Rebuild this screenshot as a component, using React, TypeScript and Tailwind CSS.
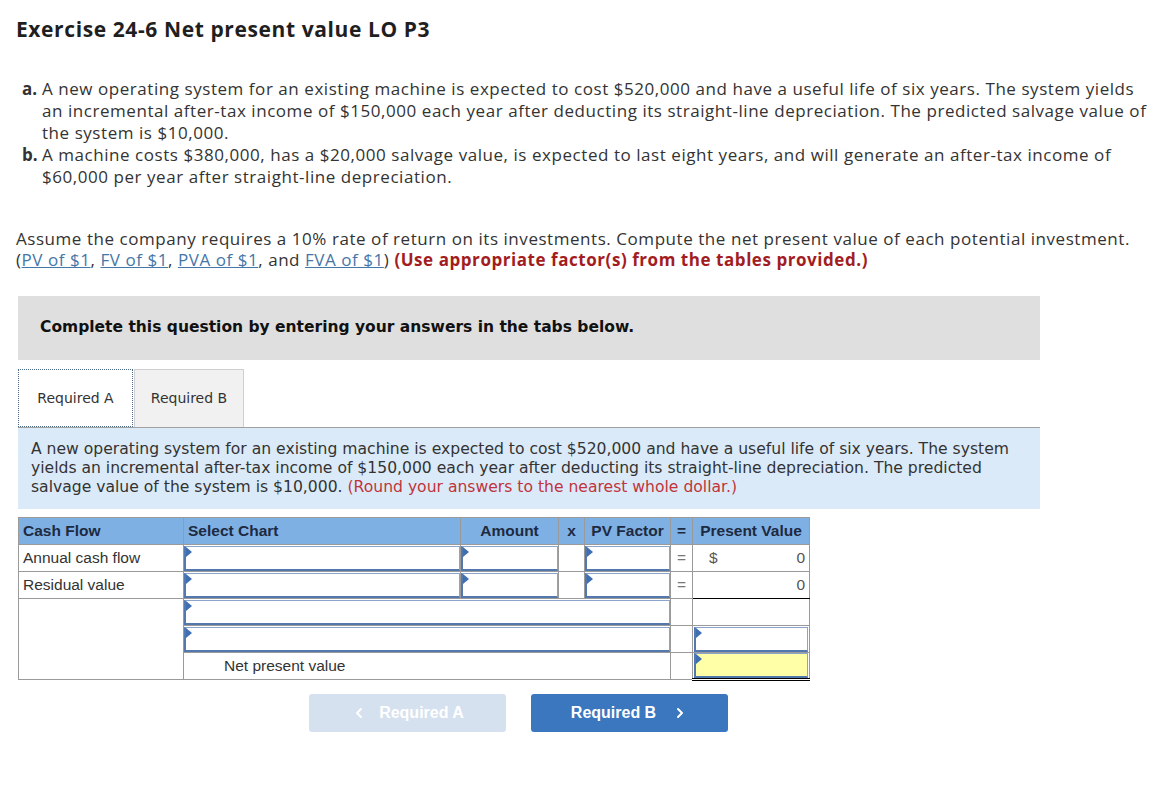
import { ChevronLeft, ChevronRight } from 'lucide-react';

function Marker() {
  return (
    <span className="absolute left-0 top-0 h-0 w-0 border-y-[5px] border-l-[6px] border-y-transparent border-l-[#3f6fb3]" />
  );
}

function InputBox({ yellow = false }: { yellow?: boolean }) {
  return (
    <div
      className={`relative h-[25px] w-full border border-[#8aa4cc] border-b-2 border-l-2 border-b-[#5378ad] border-l-[#5378ad] ${
        yellow ? 'bg-[#ffffa8]' : 'bg-white'
      }`}
    >
      <Marker />
    </div>
  );
}

const cell = 'border border-[#9a9a9a] p-0 align-middle';

function AnswerTable() {
  return (
    <table className="mt-2 ml-[2px] w-[791px] table-fixed border-collapse font-['Liberation_Sans',Arial,sans-serif] text-[15.5px] text-[#333]">
      <colgroup>
        <col className="w-[165px]" />
        <col className="w-[277px]" />
        <col className="w-[98px]" />
        <col className="w-[26px]" />
        <col className="w-[86px]" />
        <col className="w-[22px]" />
        <col className="w-[117px]" />
      </colgroup>
      <thead>
        <tr className="h-[27px] bg-[#7fb0e4] font-bold text-[#1d2a3f]">
          <th className={`${cell} pl-1 text-left`}>Cash Flow</th>
          <th className={`${cell} pl-1 text-left`}>Select Chart</th>
          <th className={`${cell} text-center`}>Amount</th>
          <th className={`${cell} text-center`}>x</th>
          <th className={`${cell} text-center`}>PV Factor</th>
          <th className={`${cell} text-center`}>=</th>
          <th className={`${cell} text-center`}>Present Value</th>
        </tr>
      </thead>
      <tbody>
        <tr className="h-[27px]">
          <td className={`${cell} pl-1`}>Annual cash flow</td>
          <td className={cell}><InputBox /></td>
          <td className={cell}><InputBox /></td>
          <td className={cell} />
          <td className={cell}><InputBox /></td>
          <td className={`${cell} text-center text-[#777]`}>=</td>
          <td className={`${cell} px-1 text-[#555]`}>
            <div className="flex justify-between pl-3">
              <span>$</span>
              <span>0</span>
            </div>
          </td>
        </tr>
        <tr className="h-[27px]">
          <td className={`${cell} pl-1`}>Residual value</td>
          <td className={cell}><InputBox /></td>
          <td className={cell}><InputBox /></td>
          <td className={cell} />
          <td className={cell}><InputBox /></td>
          <td className={`${cell} text-center text-[#777]`}>=</td>
          <td className={`${cell} border-b-black px-1 text-right text-[#555]`}>0</td>
        </tr>
        <tr className="h-[27px]">
          <td className={cell} rowSpan={3} />
          <td className={cell} colSpan={4}><InputBox /></td>
          <td className={cell} />
          <td className={`${cell} border-t-black`} />
        </tr>
        <tr className="h-[27px]">
          <td className={cell} colSpan={4}><InputBox /></td>
          <td className={cell} />
          <td className={`${cell} px-[1px]`}><InputBox /></td>
        </tr>
        <tr className="h-[27px]">
          <td className={`${cell} pl-10`} colSpan={4}>Net present value</td>
          <td className={cell} />
          <td className={`${cell} border-b-[3px] border-b-black border-double px-[1px]`}>
            <InputBox yellow />
          </td>
        </tr>
      </tbody>
    </table>
  );
}

export default function App() {
  return (
    <div className="min-h-screen bg-white px-4 pt-[17px] pb-16 font-['Open_Sans',sans-serif] text-[#333]">
      <h1 className="text-[21px] leading-6 font-bold tracking-[0.6px] text-[#1f1f1f]">
        Exercise 24-6 Net present value LO P3
      </h1>

      <ol className="mt-[37px] ml-[6px] text-[17px] leading-[22px] tracking-[0.55px] whitespace-nowrap">
        <li className="flex">
          <span className="w-5 shrink-0 font-bold tracking-normal">a.</span>
          <span>
            A new operating system for an existing machine is expected to cost $520,000 and have a useful life of six
            years. The system yields
            <br />
            an incremental after-tax income of $150,000 each year after deducting its straight-line depreciation. The
            predicted salvage value of
            <br />
            the system is $10,000.
          </span>
        </li>
        <li className="flex">
          <span className="w-5 shrink-0 font-bold tracking-normal">b.</span>
          <span>
            A machine costs $380,000, has a $20,000 salvage value, is expected to last eight years, and will generate an
            after-tax income of
            <br />
            $60,000 per year after straight-line depreciation.
          </span>
        </li>
      </ol>

      <p className="mt-10 text-[17px] leading-[21px] tracking-[0.55px] whitespace-nowrap">
        Assume the company requires a 10% rate of return on its investments. Compute the net present value of each
        potential investment.
        <br />
        (<a className="text-[#4576a8] underline">PV of $1</a>, <a className="text-[#4576a8] underline">FV of $1</a>,{' '}
        <a className="text-[#4576a8] underline">PVA of $1</a>, and <a className="text-[#4576a8] underline">FVA of $1</a>){' '}
        <span className="font-bold text-[#a21d22]">(Use appropriate factor(s) from the tables provided.)</span>
      </p>

      <div className="mt-[26px] ml-[2px] w-[1022px]">
        <div className="flex h-16 items-center bg-[#dfdfdf] pl-[22px] font-['DejaVu_Sans',Verdana,sans-serif] text-[15.5px] font-bold text-[#111]">
          Complete this question by entering your answers in the tabs below.
        </div>

        <div className="mt-[9px] flex items-end border-b border-[#a0a0a0] font-['DejaVu_Sans',Verdana,sans-serif] text-[14px] text-[#333]">
          <div className="flex h-[58px] w-[115px] items-center justify-center border border-dotted border-[#4a6a8a] bg-white">
            Required A
          </div>
          <div className="ml-[1px] flex h-[58px] w-[110px] items-center justify-center border border-b-0 border-[#cfcfcf] bg-[#f1f1f1]">
            Required B
          </div>
        </div>

        <div className="bg-[#dbeaf8] px-[13px] pt-[12px] pb-[12px] font-['DejaVu_Sans',Verdana,sans-serif] text-[15.6px] leading-[19px] text-[#333]">
          A new operating system for an existing machine is expected to cost $520,000 and have a useful life of six
          years. The system
          <br />
          yields an incremental after-tax income of $150,000 each year after deducting its straight-line depreciation.
          The predicted
          <br />
          salvage value of the system is $10,000.{' '}
          <span className="text-[#c0343b]">(Round your answers to the nearest whole dollar.)</span>
        </div>
      </div>

      <AnswerTable />

      <div className="mt-[13px] ml-[293px] flex gap-[25px] font-['Liberation_Sans',Arial,sans-serif] text-[16px] font-bold text-white">
        <button className="flex h-[38px] w-[197px] items-center justify-center gap-3 rounded-[3px] bg-[#d5e1ef]">
          <ChevronLeft size={16} strokeWidth={3} />
          Required A
        </button>
        <button className="flex h-[38px] w-[197px] items-center justify-center gap-4 rounded-[3px] bg-[#3a77bf]">
          Required B
          <ChevronRight size={16} strokeWidth={3} />
        </button>
      </div>
    </div>
  );
}
